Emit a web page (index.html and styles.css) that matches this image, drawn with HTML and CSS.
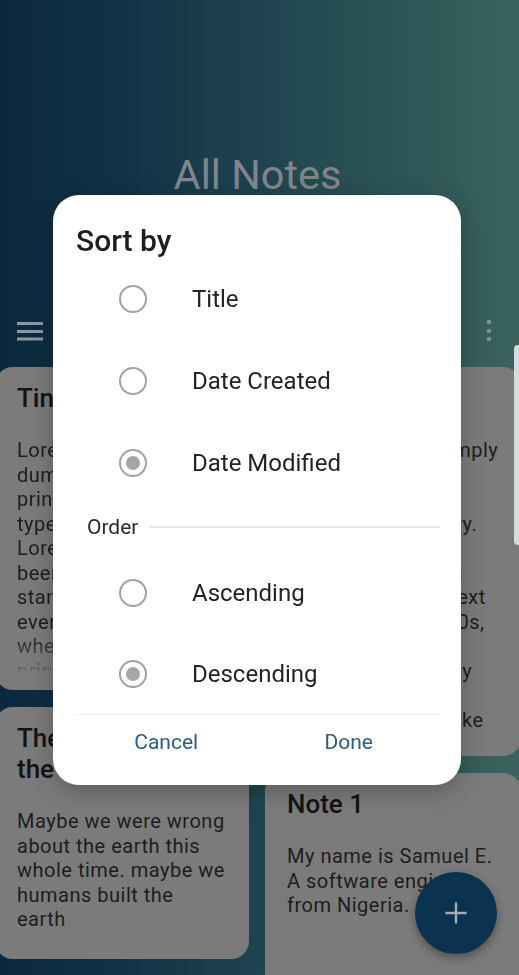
FILE: index.html
```html
<!DOCTYPE html>
<html lang="en">
<head>
<meta charset="utf-8">
<title>All Notes</title>
<link rel="stylesheet" href="styles.css">
</head>
<body>
<div class="app">
  <header class="header">
    <h1 class="page-title">All Notes</h1>
  </header>
  <div class="toolbar">
    <button class="icon-btn menu-btn" aria-label="Menu">
      <svg width="26" height="20" viewBox="0 0 26 20"><path d="M0 2.5H26M0 10.5H26M0 18H26" stroke="#8d989f" stroke-width="3"/></svg>
    </button>
    <button class="icon-btn more-btn" aria-label="More">
      <svg width="6" height="24" viewBox="0 0 6 24"><circle cx="3" cy="3" r="2.2" fill="#7c9591"/><circle cx="3" cy="12" r="2.2" fill="#7c9591"/><circle cx="3" cy="20" r="2.2" fill="#7c9591"/></svg>
    </button>
  </div>
  <main class="notes">
    <div class="col">
      <article class="card card-fade">
        <h2 class="card-title">Tiny Lorem note</h2>
        <p class="card-body body-fade">Lorem Ipsum is simply<br>dummy text of the<br>printing and<br>typesetting industry.<br>Lorem Ipsum has<br>been the industry's<br>standard dummy text<br>ever since the 1500s,<br>when an unknown<br>printer took a galley<br>of type and<br>scrambled it to make</p>
      </article>
      <article class="card card-short">
        <h2 class="card-title">The truth about the earth</h2>
        <p class="card-body">Maybe we were wrong<br>about the earth this<br>whole time. maybe we<br>humans built the<br>earth</p>
      </article>
    </div>
    <div class="col">
      <article class="card">
        <h2 class="card-title">Tiny Lorem</h2>
        <p class="card-body body-clip">Lorem Ipsum is simply<br>dummy text of the<br>printing and<br>typesetting industry.<br>Lorem Ipsum has<br>been the industry's<br>standard dummy text<br>ever since the 1500s,<br>when an unknown<br>printer took a galley<br>of type and<br>scrambled it to make<br>a type specimen book.</p>
      </article>
      <article class="card card-tall">
        <h2 class="card-title">Note 1</h2>
        <p class="card-body">My name is Samuel E.<br>A software engineer<br>from Nigeria.</p>
      </article>
    </div>
  </main>
</div>

<div class="scroll-thumb"></div>

<button class="fab" aria-label="Add note">
  <svg width="24" height="24" viewBox="0 0 24 24"><path d="M12 1.5V22.5M1.5 12H22.5" stroke="#a3adb3" stroke-width="2.4"/></svg>
</button>

<div class="dialog" role="dialog" aria-label="Sort by">
  <h3 class="dialog-title">Sort by</h3>
  <div class="options">
    <label class="option"><span class="radio"></span><span class="opt-label">Title</span></label>
    <label class="option"><span class="radio"></span><span class="opt-label">Date Created</span></label>
    <label class="option"><span class="radio checked"></span><span class="opt-label">Date Modified</span></label>
  </div>
  <div class="section">
    <span class="section-label">Order</span>
    <span class="section-line"></span>
  </div>
  <div class="options options-order">
    <label class="option"><span class="radio"></span><span class="opt-label">Ascending</span></label>
    <label class="option"><span class="radio checked"></span><span class="opt-label">Descending</span></label>
  </div>
  <div class="actions">
    <button class="action">Cancel</button>
    <button class="action">Done</button>
  </div>
</div>
</body>
</html>
```

FILE: styles.css
```css
* { box-sizing: border-box; }

html, body {
  margin: 0;
  padding: 0;
}

body {
  width: 519px;
  height: 975px;
  overflow: hidden;
  font-family: Roboto, "Noto Sans", Arial, sans-serif;
  background: linear-gradient(90deg, #0b293e 0%, #123447 25%, #1f4450 50%, #2c5456 75%, #3b635e 100%);
}

.app {
  display: flex;
  flex-direction: column;
}

.header {
  padding-top: 151px;
  display: flex;
  justify-content: center;
}

.page-title {
  margin: 0 0 0 -4px;
  font-size: 41.5px;
  line-height: 48px;
  font-weight: 400;
  color: #80868a;
}

.toolbar {
  margin-top: 112px;
  height: 40px;
  display: flex;
  align-items: center;
  justify-content: space-between;
  padding: 0 27px 0 17px;
}

.icon-btn {
  border: 0;
  background: none;
  padding: 0;
  display: flex;
}

.notes {
  margin-top: 16px;
  margin-left: -5px;
  display: grid;
  grid-template-columns: 254px 256px;
  column-gap: 16px;
  align-items: start;
}

.col {
  display: flex;
  flex-direction: column;
  gap: 17px;
}

.card {
  background: #7b7b7b;
  border-radius: 18px;
  padding: 16px 12px 24px 22px;
  overflow: hidden;
}

.card-fade {
  padding-bottom: 19px;
}

.card-short {
  padding-bottom: 27px;
}

.card-tall {
  min-height: 240px;
}

.card-title {
  margin: 0 0 24px 0;
  font-size: 26px;
  line-height: 31px;
  font-weight: 500;
  color: #141414;
  white-space: nowrap;
  overflow: hidden;
}

.card-short .card-title {
  white-space: normal;
  padding-right: 40px;
}

.card-body {
  margin: 0;
  font-size: 20px;
  line-height: 24.5px;
  letter-spacing: 0.5px;
  color: #1d1d1d;
  white-space: nowrap;
}

.body-fade {
  height: 233px;
  overflow: hidden;
  -webkit-mask-image: linear-gradient(to bottom, #000 84%, rgba(0,0,0,0.2) 100%);
  mask-image: linear-gradient(to bottom, #000 84%, rgba(0,0,0,0.2) 100%);
}

.body-clip {
  height: 294px;
  overflow: hidden;
}

.scroll-thumb {
  position: fixed;
  left: 514px;
  top: 345px;
  width: 8px;
  height: 200px;
  border-radius: 5px;
  background: #d6dad9;
}

.fab {
  position: fixed;
  left: 415px;
  top: 872px;
  width: 82px;
  height: 82px;
  border-radius: 50%;
  border: 0;
  background: #0b3350;
  display: flex;
  align-items: center;
  justify-content: center;
  box-shadow: 0 4px 10px rgba(0,0,0,0.35);
}

.dialog {
  position: fixed;
  left: 53px;
  top: 195px;
  width: 408px;
  height: 590px;
  background: #ffffff;
  border-radius: 26px;
  padding: 29px 0 16px 0;
  display: flex;
  flex-direction: column;
  box-shadow: 0 6px 24px rgba(0,0,0,0.25);
}

.dialog-title {
  margin: 0;
  padding-left: 23px;
  font-size: 30px;
  line-height: 34px;
  font-weight: 500;
  color: #1e1e1e;
}

.options {
  display: flex;
  flex-direction: column;
}

.options-order {
  margin-top: 2px;
}

.option {
  height: 82px;
  display: flex;
  align-items: center;
  padding-left: 66px;
}

.options-order .option {
  height: 81px;
}

.radio {
  width: 28px;
  height: 28px;
  border-radius: 50%;
  border: 2.5px solid #a2a2a2;
  display: flex;
  align-items: center;
  justify-content: center;
  flex: none;
}

.radio.checked::after {
  content: "";
  width: 14px;
  height: 14px;
  border-radius: 50%;
  background: #a6a6a6;
}

.opt-label {
  margin-left: 45px;
  font-size: 24px;
  color: #232323;
}

.section {
  height: 46px;
  display: flex;
  align-items: center;
  padding: 0 21px 0 34px;
  gap: 11px;
}

.section-label {
  font-size: 21px;
  color: #2a2a2a;
}

.section-line {
  flex: 1;
  height: 1.5px;
  background: #e6e6e6;
}

.actions {
  margin: 0 21px 0 22px;
  border-top: 1px solid #f0f0f0;
  height: 54px;
  display: flex;
}

.action {
  flex: 1;
  border: 0;
  background: none;
  font-family: inherit;
  font-size: 21px;
  color: #2b5d7c;
  padding: 0;
}
```
